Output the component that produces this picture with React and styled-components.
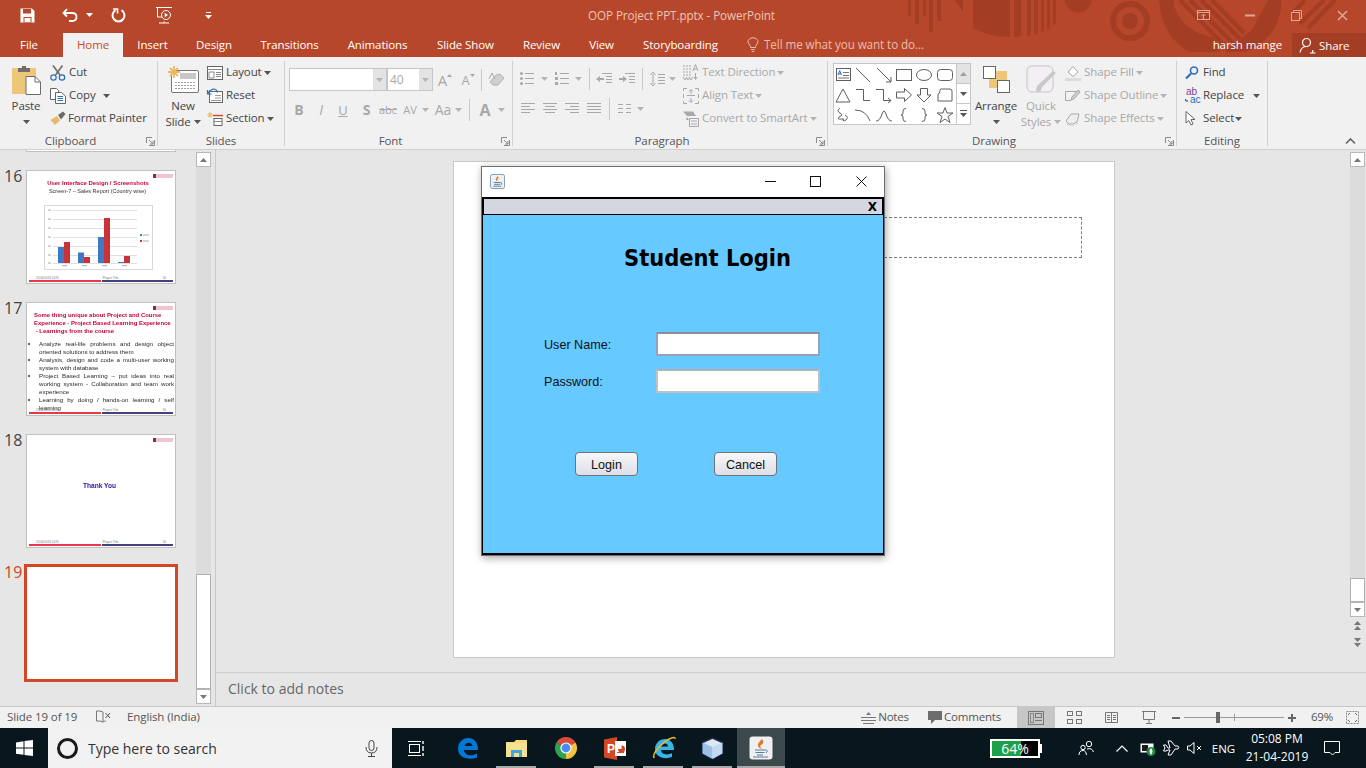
import React from 'react';
import styled, { createGlobalStyle } from 'styled-components';

const UI = `'Open Sans', 'Noto Sans', 'Liberation Sans', sans-serif`;
const RED = '#b7472a';
const DARK_RED = '#a33e24';
const OFF = '#a8a8a8';
const INK = '#444444';

const Global = createGlobalStyle`
  html, body { margin: 0; padding: 0; background: #e6e6e6; overflow: hidden; }
  * { box-sizing: border-box; }
`;

const Screen = styled.div`
  width: 1366px;
  height: 768px;
  display: flex;
  flex-direction: column;
  overflow: hidden;
  font-family: ${UI};
  font-size: 11.5px;
  letter-spacing: -0.1px;
  color: ${INK};
`;

const Svg = styled.svg`
  display: block;
  flex-shrink: 0;
  overflow: visible;
`;
const Ico = ({ w = 16, h = 16, children, ...rest }) => (
  <Svg width={w} height={h} viewBox={`0 0 ${w} ${h}`} fill="none" {...rest}>
    {children}
  </Svg>
);

/* title bar */
const TitleBar = styled.div`
  position: relative;
  height: 30px;
  display: flex;
  align-items: center;
  background: ${RED};
`;
const Pattern = styled.svg`
  position: absolute;
  left: 890px;
  top: 0;
`;
const Qat = styled.div`
  position: relative;
  width: 230px;
  display: flex;
  align-items: center;
  padding-left: 18px;
`;
const QatSlot = styled.div`
  width: ${p => p.$w}px;
  margin-left: ${p => p.$ml || 0}px;
  flex-shrink: 0;
  display: flex;
  justify-content: center;
`;
const DocTitle = styled.div`
  position: relative;
  flex: 1;
  text-align: center;
  color: #eec4b8;
  font-size: 11.7px;
`;
const WinControls = styled.div`
  position: relative;
  margin-left: 47px;
  display: flex;
`;
const WinSlot = styled.div`
  width: 46.5px;
  display: flex;
  justify-content: center;
`;

/* tab row */
const TabRow = styled.div`
  position: relative;
  height: 27px;
  display: flex;
  align-items: flex-end;
`;
const TabBack = styled.div`
  background: ${RED};
`;
const Tab = styled.div`
  width: ${p => p.$w}px;
  margin-left: ${p => p.$ml || 0}px;
  height: 24px;
  padding-bottom: 2px;
  display: flex;
  align-items: center;
  justify-content: center;
  font-size: 11.5px;
  color: ${p => (p.$active ? '#d24726' : '#ffffff')};
  background: ${p => (p.$active ? '#f1f1f1' : 'transparent')};
`;
const TellMe = styled.div`
  margin-left: 15px;
  height: 24px;
  padding-bottom: 2px;
  display: flex;
  align-items: center;
  gap: 5px;
  font-size: 11.7px;
  color: #ecbcae;
`;
const UserName = styled.div`
  margin-left: auto;
  height: 24px;
  padding-bottom: 2px;
  display: flex;
  align-items: center;
  color: #fff;
`;
const ShareBtn = styled.div`
  margin-left: 10px;
  width: 74px;
  height: 24px;
  display: flex;
  align-items: center;
  gap: 3px;
  padding-left: 7px;
  color: #fff;
  background: ${DARK_RED};
`;

/* ribbon */
const Ribbon = styled.div`
  position: relative;
  height: 93px;
  padding-top: 4px;
  display: flex;
  align-items: flex-start;
  background: #f1f1f1;
  border-bottom: 1px solid #d0d0d0;
`;
const Group = styled.div`
  position: relative;
  width: ${p => p.$w}px;
  height: 85px;
  flex-shrink: 0;
  border-right: 1px solid #d2d2d2;
`;
const GroupBody = styled.div`
  height: 71px;
  display: flex;
  align-items: flex-start;
  padding-left: ${p => p.$pl || 0}px;
`;
const GroupLabel = styled.div`
  height: 14px;
  line-height: 18px;
  text-align: center;
  padding-right: ${p => (p.$launcher ? 16 : 0)}px;
  color: #555;
`;
const Launcher = styled.div`
  position: absolute;
  right: 2px;
  bottom: 0;
`;
const Collapse = styled.div`
  position: absolute;
  left: 1345px;
  top: 81px;
`;
const BigBtn = styled.div`
  width: ${p => p.$w}px;
  margin-left: ${p => p.$ml || 0}px;
  display: flex;
  flex-direction: column;
  align-items: center;
  color: ${p => (p.$off ? OFF : INK)};
`;
const BigIcon = styled.div`
  height: 37px;
  display: flex;
  align-items: center;
  justify-content: center;
`;
const BigLine = styled.div`
  height: 16px;
  line-height: 16px;
  display: flex;
  align-items: center;
  gap: 3px;
  white-space: nowrap;
`;
const SmallCol = styled.div`
  margin-left: ${p => p.$ml || 0}px;
  display: flex;
  flex-direction: column;
`;
const Tool = styled.div`
  height: 23px;
  padding-bottom: 2px;
  display: flex;
  align-items: center;
  white-space: nowrap;
  color: ${p => (p.$off ? OFF : INK)};
`;
const ToolIcon = styled.div`
  width: ${p => p.$w || 19}px;
  margin-top: 2px;
  display: flex;
  justify-content: flex-start;
`;
const ToolCaret = styled.div`
  margin-left: ${p => p.$ml || 2}px;
  margin-top: 2px;
`;
const Stack = styled.div`
  width: ${p => p.$w}px;
  flex-shrink: 0;
  padding-top: ${p => p.$pt || 7}px;
  display: flex;
  flex-direction: column;
  gap: 7px;
`;
const IconRow = styled.div`
  height: 23px;
  display: flex;
  align-items: center;
  padding-left: ${p => p.$pl || 0}px;
`;
const Slot = styled.div`
  width: ${p => p.$w}px;
  flex-shrink: 0;
  display: flex;
  justify-content: center;
  align-items: center;
  color: ${OFF};
  font-size: ${p => p.$size || 13}px;
  font-weight: ${p => (p.$bold ? 700 : 400)};
  font-style: ${p => (p.$italic ? 'italic' : 'normal')};
  text-decoration: ${p => p.$deco || 'none'};
  white-space: nowrap;
`;
const RowSep = styled.div`
  width: 1px;
  height: 22px;
  margin-left: ${p => p.$ml || 0}px;
  background: #c8c8c8;
  flex-shrink: 0;
`;
const Combo = styled.div`
  width: ${p => p.$w}px;
  height: 23px;
  display: flex;
  background: #fff;
  border: 1px solid #c6c6c6;
`;
const ComboText = styled.div`
  flex: 1;
  padding-left: 2px;
  line-height: 21px;
  font-size: 12px;
  color: ${OFF};
`;
const ComboDrop = styled.div`
  width: 13px;
  display: flex;
  align-items: center;
  justify-content: center;
  background: #e3e3e3;
`;
const Gallery = styled.div`
  margin-top: 2px;
  margin-left: 5px;
  width: 138px;
  height: 62px;
  display: flex;
  background: #fff;
  border: 1px solid #c6c6c6;
`;
const GalleryGrid = styled.div`
  flex: 1;
  margin-left: -1px;
  padding-top: 1px;
  display: grid;
  grid-template-columns: repeat(6, 20.3px);
  grid-auto-rows: 20px;
  justify-items: center;
  align-items: center;
`;
const GalleryScroll = styled.div`
  width: 14px;
  display: flex;
  flex-direction: column;
  border-left: 1px solid #c6c6c6;
`;
const GalleryBtn = styled.div`
  height: 20px;
  display: flex;
  align-items: center;
  justify-content: center;
  background: ${p => (p.$off ? '#e3e3e3' : '#fff')};
  border-bottom: 1px solid ${p => (p.$last ? 'transparent' : '#c6c6c6')};
`;

/* main area */
const Main = styled.div`
  flex: 1;
  display: flex;
  min-height: 0;
  background: #e6e6e6;
`;
const LeftPane = styled.div`
  width: 216px;
  display: flex;
  border-right: 1px solid #c8c8c8;
`;
const ThumbList = styled.div`
  flex: 1;
  overflow: hidden;
`;
const ThumbTail = styled.div`
  width: 150px;
  height: 2px;
  margin: 0 0 18px 26px;
  background: #fff;
  border: 1px solid #c0c0c0;
  border-top: 0;
`;
const ThumbItem = styled.div`
  display: flex;
  margin-bottom: 18px;
`;
const ThumbNum = styled.div`
  width: 26px;
  padding-left: 4px;
  margin-top: -4px;
  line-height: 20px;
  font-size: 16px;
  letter-spacing: 0;
  color: ${p => (p.$active ? '#d24726' : '#444')};
`;
const Thumb = styled.div`
  position: relative;
  width: 150px;
  height: 114px;
  flex-shrink: 0;
  display: flex;
  flex-direction: column;
  overflow: hidden;
  background: #fff;
  border: 1px solid #c0c0c0;
  outline: ${p => (p.$active ? '3px solid #d24726' : 'none')};
  outline-offset: -1px;
  font-family: 'Liberation Sans', sans-serif;
  letter-spacing: 0;
`;
const ThumbLogo = styled.div`
  align-self: flex-end;
  width: 20px;
  height: 4px;
  margin: 3px 2px 0 0;
  background: linear-gradient(90deg, #7a2f55 0 3px, #efc6cf 3px);
  filter: blur(0.5px);
`;
const ThumbTitle = styled.div`
  padding: 1px ${p => (p.$align ? 7 : 13)}px 0 7px;
  font-size: 5.95px;
  line-height: 8.2px;
  font-weight: 700;
  color: #cc0038;
  text-align: ${p => p.$align || 'center'};
  white-space: nowrap;
  filter: blur(0.3px);
`;
const ThumbSub = styled.div`
  padding-right: 7px;
  text-align: center;
  font-size: 5.5px;
  line-height: 8px;
  color: #333;
  filter: blur(0.3px);
`;
const ThumbChart = styled.div`
  margin: 10px 0 0 17px;
  width: 109px;
  height: 65px;
  border: 1px solid #d8d8d8;
  filter: blur(0.3px);
`;
const ThumbBullets = styled.ul`
  margin: 4px 0 0;
  padding: 0 1px 0 12px;
  font-size: 6.2px;
  line-height: 8px;
  color: #2a2a2a;
  filter: blur(0.3px);
  & li { text-align: justify; }
`;
const ThumbCenter = styled.div`
  height: 0;
  margin-top: 40px;
  padding-right: 3px;
  text-align: center;
  font-size: 6.6px;
  font-weight: 700;
  color: #3a0f9c;
  filter: blur(0.25px);
`;
const ThumbFoot = styled.div`
  position: absolute;
  left: 0;
  right: 0;
  bottom: 0;
  padding: 0 1px 1px;
`;
const ThumbFootText = styled.div`
  display: flex;
  justify-content: space-between;
  padding: 0 8px;
  font-size: 3px;
  line-height: 4px;
  color: #777;
`;
const ThumbBars = styled.div`
  display: flex;
  gap: 1px;
  height: 2px;
  padding: 0 1px;
  & > div:first-child { width: 72px; background: #e8384a; }
  & > div:last-child { flex: 1; background: #46407f; }
`;
const VScroll = styled.div`
  width: 15px;
  margin: 2px ${p => p.$mr || 4}px 0 0;
  display: flex;
  flex-direction: column;
  align-items: stretch;
`;
const ScrollBtn = styled.div`
  height: 15px;
  display: flex;
  align-items: center;
  justify-content: center;
  background: #fff;
  border: 1px solid #b8b8b8;
`;
const ScrollTrack = styled.div`
  height: ${p => p.$h}px;
  background: #dcdcdc;
`;
const ScrollThumb = styled.div`
  height: ${p => p.$h}px;
  background: #fff;
  border: 1px solid #b0b0b0;
`;
const ScrollJump = styled.div`
  height: 17px;
  display: flex;
  align-items: center;
  justify-content: center;
`;
const WorkColumn = styled.div`
  flex: 1;
  min-width: 0;
  display: flex;
  flex-direction: column;
`;
const Editor = styled.div`
  height: 522px;
  display: flex;
  justify-content: space-between;
`;
const Slide = styled.div`
  position: relative;
  width: 662px;
  height: 497px;
  margin: 11px 0 0 237px;
  background: #fff;
  border: 1px solid #c8c8c8;
`;
const Placeholder = styled.div`
  position: absolute;
  left: 30px;
  top: 55px;
  width: 598px;
  height: 41px;
  border: 1px dashed #7f7f7f;
`;
const NotesPane = styled.div`
  flex: 1;
  display: flex;
  align-items: center;
  padding: 0 0 2px 12px;
  font-size: 14px;
  color: #666;
  letter-spacing: 0;
  border-top: 1px solid #cfcfcf;
`;

/* java window */
const JavaWin = styled.div`
  position: absolute;
  left: 27px;
  top: 4px;
  width: 404px;
  height: 390px;
  display: flex;
  flex-direction: column;
  background: #fff;
  border: 1px solid #6d6d6d;
  box-shadow: 1px 2px 8px rgba(0, 0, 0, 0.35);
  font-family: 'Liberation Sans', sans-serif;
  letter-spacing: 0;
`;
const JavaTitle = styled.div`
  height: 30px;
  padding: 0 0 2px 8px;
  display: flex;
  align-items: center;
`;
const JavaBtns = styled.div`
  margin-left: auto;
  display: flex;
`;
const JavaBtn = styled.div`
  width: 45.5px;
  display: flex;
  justify-content: center;
`;
const Inner = styled.div`
  flex: 1;
  display: flex;
  flex-direction: column;
  border: 1px solid #000;
  border-top-width: 2px;
  border-bottom-width: 2px;
`;
const InnerBar = styled.div`
  height: 16px;
  display: flex;
  justify-content: flex-end;
  align-items: center;
  padding-right: 5px;
  background: #d4d7e0;
  border: 1px solid #000;
  border-width: 0 1px 1px;
  font-family: 'DejaVu Sans', sans-serif;
  font-size: 12px;
  font-weight: 700;
  color: #000;
`;
const LoginPanel = styled.div`
  flex: 1;
  padding: 27px 0 0 61px;
  background: #66c9ff;
`;
const LoginTitle = styled.div`
  margin-left: 80px;
  padding-top: 1px;
  line-height: 30px;
  font-family: 'DejaVu Sans', sans-serif;
  font-stretch: condensed;
  font-size: 23.4px;
  font-weight: 700;
  color: #000;
`;
const FormGrid = styled.div`
  margin-top: 59px;
  display: grid;
  grid-template-columns: 112px 164px;
  grid-auto-rows: 24px;
  row-gap: 13px;
  align-items: center;
`;
const FieldLabel = styled.label`
  padding-top: 1px;
  font-size: 12.6px;
  color: #111;
`;
const Field = styled.input`
  width: 164px;
  height: 24px;
  padding: 0;
  background: #fff;
  border: 2px solid ${p => (p.$focus ? '#93a2bb' : '#bcc0c7')};
  border-top-color: ${p => (p.$focus ? '#8a909c' : '#aeb2b9')};
  outline: none;
`;
const BtnRow = styled.div`
  margin: 59px 0 0 31px;
  display: flex;
  gap: 76px;
`;
const LoginBtn = styled.button`
  width: 63px;
  height: 24px;
  padding: 1px 0 0;
  font-family: 'Liberation Sans', sans-serif;
  font-size: 12.6px;
  color: #111;
  background: linear-gradient(#f6f7f9, #dcdfe6);
  border: 1px solid #6f747c;
  border-radius: 4px;
`;

/* status bar */
const StatusBar = styled.div`
  height: 22px;
  display: flex;
  align-items: center;
  padding-left: 7px;
  background: #f1f1f1;
  border-top: 1px solid #c8c8c8;
  color: #555;
`;
const StatusText = styled.div`
  width: ${p => (p.$w ? `${p.$w}px` : 'auto')};
  padding-bottom: 2px;
  white-space: nowrap;
`;
const StatusRight = styled.div`
  margin-left: auto;
  height: 100%;
  display: flex;
  align-items: center;
  letter-spacing: -0.2px;
`;
const StatusBtn = styled.div`
  width: ${p => p.$w}px;
  height: 100%;
  padding-left: ${p => p.$pl || 0}px;
  display: flex;
  align-items: center;
  justify-content: ${p => (p.$pl ? 'flex-start' : 'center')};
  gap: 2px;
  background: ${p => (p.$on ? '#c6c6c6' : 'transparent')};
`;
const ZoomSlider = styled.div`
  position: relative;
  width: 100px;
  height: 1px;
  background: #9a9a9a;
  &::after {
    content: '';
    position: absolute;
    left: 50px;
    top: -3px;
    width: 1px;
    height: 7px;
    background: #9a9a9a;
  }
`;
const ZoomKnob = styled.div`
  position: absolute;
  left: 32px;
  top: -5px;
  width: 4px;
  height: 11px;
  background: #666;
`;

/* taskbar */
const Taskbar = styled.div`
  height: 40px;
  display: flex;
  align-items: stretch;
  background: #07171d;
  color: #fff;
  font-size: 11.5px;
`;
const StartBtn = styled.div`
  width: 48px;
  display: flex;
  align-items: center;
  justify-content: center;
`;
const SearchBox = styled.div`
  width: 344px;
  display: flex;
  align-items: center;
  background: #f2f2f2;
  padding-left: 8px;
`;
const SearchText = styled.div`
  margin-left: 9px;
  font-size: 14px;
  color: #333;
  letter-spacing: 0;
  flex: 1;
`;
const MicSlot = styled.div`
  width: 27px;
`;
const TaskSlot = styled.div`
  position: relative;
  width: ${p => p.$w || 49}px;
  margin-left: ${p => p.$ml || 0}px;
  display: flex;
  align-items: center;
  justify-content: center;
  background: ${p => (p.$active ? '#3b484c' : 'transparent')};
  &::after {
    content: '';
    display: ${p => (p.$open ? 'block' : 'none')};
    position: absolute;
    bottom: 0;
    left: ${p => (p.$active ? 0 : 4)}px;
    right: ${p => (p.$active ? 0 : 5)}px;
    height: 2px;
    background: #a9a9a9;
  }
`;
const Battery = styled.div`
  position: relative;
  width: 50px;
  height: 19px;
  margin: 11px 0 0 205px;
  display: flex;
  align-items: center;
  justify-content: center;
  border: 2px solid #fff;
  font-size: 14px;
  letter-spacing: 0;
  background: linear-gradient(90deg, #1ea04b 0 64%, #000 64%);
  &::after {
    content: '';
    position: absolute;
    right: -4px;
    top: 3px;
    width: 2px;
    height: 9px;
    background: #fff;
  }
`;
const TraySlot = styled.div`
  width: ${p => p.$w}px;
  margin-left: ${p => p.$ml || 0}px;
  display: flex;
  align-items: center;
  justify-content: center;
  white-space: nowrap;
  letter-spacing: 0;
`;
const Clock = styled.div`
  width: 58px;
  margin-left: 8px;
  display: flex;
  flex-direction: column;
  align-items: center;
  justify-content: center;
  line-height: 18.5px;
  font-size: 12px;
  white-space: nowrap;
  letter-spacing: 0;
`;

/* small shared drawings */
const Caret = ({ c = '#555', up }) => (
  <Ico w={7} h={4}>
    <path d={up ? 'M0 4 L3.5 0 L7 4Z' : 'M0 0 L7 0 L3.5 4Z'} fill={c} />
  </Ico>
);
const OffCaret = () => <Caret c="#b4b4b4" />;
const LaunchIcon = () => (
  <Ico w={9} h={9}>
    <path d="M0.5 6 V0.5 H6 M8.5 3 V8.5 H3" stroke="#8a8a8a" />
    <path d="M3 3 L7 7 M7 4 V7 H4" stroke="#8a8a8a" />
  </Ico>
);
const Lines = ({ c = OFF, rows, w = 14, x = 0 }) =>
  rows.map((y, i) => <path key={i} d={`M${x} ${y}.5 h${w}`} stroke={c} />);

const ParaLines = ({ widths }) => (
  <Ico w={14} h={13}>
    {widths.map((o, i) => (
      <path key={i} d={`M${o[0]} ${i * 3 + 1}.5 H${o[1]}`} stroke={OFF} />
    ))}
  </Ico>
);

const TitlePattern = () => (
  <Pattern width={476} height={57} viewBox="0 0 476 57">
    <g fill={DARK_RED}>
      <rect x="18" y="0" width="3" height="16" />
      <rect x="25" y="0" width="4" height="24" />
      <rect x="33" y="0" width="3" height="16" />
      <rect x="39" y="0" width="4" height="32" />
      <rect x="47" y="0" width="4" height="21" />
      <path d="M65 0 H73 V12Z" />
      <path d="M83 0 H120 V37 Q100 37 83 28Z" />
      <path d="M124 0 H131 V36 L124 37Z" />
      <path d="M137 0 H141 V35 L137 36Z" />
      <path d="M144 0 H148 V33 L144 35Z" />
      <path d="M151 0 H154 V31 L151 33Z" />
      <path d="M157 0 H160 V28 L157 30Z" />
      <path d="M163 0 H166 V23 L163 26Z" />
      <circle cx="188" cy="-1" r="13.5" />
      <circle cx="240" cy="21" r="8" />
      <circle cx="240" cy="21" r="17" fill="none" stroke={DARK_RED} strokeWidth="6" />
      <path d="M269 0 H284 V6 Q293 32 325 38 L330 52 H300 Q272 38 269 0Z" />
      <path d="M391 0 V8 Q388 35 362 49 L355 52 H335 L362 30 L378 0Z" />
    </g>
    <g stroke={DARK_RED} strokeWidth="4.5">
      <path d="M290 0 L338 49" />
      <path d="M300 0 L344 44" />
      <path d="M311 0 L350 39" />
      <path d="M322 0 L354 33" />
      <path d="M415 0 L402 14" />
      <path d="M434 0 L410 24" />
      <path d="M445 0 L418 28" />
    </g>
  </Pattern>
);

const ShapeCell = ({ children }) => <Ico w={18} h={16}>{children}</Ico>;
const SHAPE = { stroke: '#5f5f5f', fill: 'none' };

const GalleryShapes = () => (
  <GalleryGrid>
    <ShapeCell>
      <rect x="2.5" y="1.5" width="14" height="12" stroke="#5f5f5f" />
      <path d="M9 5.5 h6 M9 8.5 h6 M4 11 h11" stroke="#777" />
      <path d="M4 8 L5.7 3.5 L7.4 8 M4.6 6.8 H6.9" stroke="#2a6ebb" />
    </ShapeCell>
    <ShapeCell><path d="M2 1 L16 15" {...SHAPE} /></ShapeCell>
    <ShapeCell><path d="M2 1 L16 15 M16 10 V15 H11" {...SHAPE} /></ShapeCell>
    <ShapeCell><rect x="1.5" y="2.5" width="15" height="11" {...SHAPE} /></ShapeCell>
    <ShapeCell><ellipse cx="9" cy="8" rx="7.5" ry="5.5" {...SHAPE} /></ShapeCell>
    <ShapeCell><rect x="1.5" y="2.5" width="15" height="11" rx="3" {...SHAPE} /></ShapeCell>
    <ShapeCell><path d="M9 2 L16 15 H2Z" {...SHAPE} /></ShapeCell>
    <ShapeCell><path d="M2 2.5 H9.5 V13.5 H16" {...SHAPE} /></ShapeCell>
    <ShapeCell><path d="M1 2.5 H8.5 V13.5 H16 M13 11 L16 13.5 L13 16" {...SHAPE} /></ShapeCell>
    <ShapeCell><path d="M1.5 5 H9.5 V1.5 L16.5 8 L9.5 14.5 V11 H1.5Z" {...SHAPE} /></ShapeCell>
    <ShapeCell><path d="M5.5 1.5 H12.5 V8 H16 L9 15 L2 8 H5.5Z" {...SHAPE} /></ShapeCell>
    <ShapeCell><path d="M5 2 H14 Q16 2 16 4 V14 H2 V7 Q4 7 4 3.5 Q4 2 5 2Z" {...SHAPE} /></ShapeCell>
    <ShapeCell><path d="M6 1 Q2 4 6 6 Q10 8 5 10 Q3 13 7 12 Q11 11 9 14 M11 8 Q15 10 12 13 Q9 15 9 12" {...SHAPE} /></ShapeCell>
    <ShapeCell><path d="M1 3 Q12 3 16 14" {...SHAPE} /></ShapeCell>
    <ShapeCell><path d="M1 14 Q5 14 7 7 Q9 1 11 7 Q13 14 17 14" {...SHAPE} /></ShapeCell>
    <ShapeCell><path d="M11 1.5 Q8 1.5 8 4 V6 Q8 8 6 8 Q8 8 8 10 V12 Q8 14.5 11 14.5" {...SHAPE} /></ShapeCell>
    <ShapeCell><path d="M7 1.5 Q10 1.5 10 4 V6 Q10 8 12 8 Q10 8 10 10 V12 Q10 14.5 7 14.5" {...SHAPE} /></ShapeCell>
    <ShapeCell><path d="M9 0.5 L11 6 H17 L12 9.5 L14 15.5 L9 12 L4 15.5 L6 9.5 L1 6 H7Z" {...SHAPE} /></ShapeCell>
  </GalleryGrid>
);

const ChartPic = () => (
  <Svg width={107} height={63} viewBox="0 0 107 63">
    {[4, 13, 22, 31, 40, 49, 57].map(y => (
      <path key={y} d={`M8 ${y}.5 H92`} stroke="#e0e0e0" />
    ))}
    {[4, 13, 22, 31, 40, 49, 57].map(y => (
      <rect key={y} x="3" y={y - 0.5} width="3" height="1.2" fill="#bbb" />
    ))}
    <rect x="13" y="41" width="6" height="16" fill="#3f78c4" />
    <rect x="19" y="36" width="6" height="21" fill="#c8333a" />
    <rect x="33" y="46.5" width="6" height="10.5" fill="#3f78c4" />
    <rect x="39" y="51" width="6" height="6" fill="#c8333a" />
    <rect x="53" y="31" width="6" height="26" fill="#3f78c4" />
    <rect x="59" y="12" width="6" height="45" fill="#c8333a" />
    <rect x="73" y="56" width="6" height="1" fill="#3f78c4" />
    <rect x="79" y="50" width="6" height="7" fill="#c8333a" />
    <rect x="95" y="28" width="2" height="2" fill="#3f78c4" />
    <rect x="95" y="34" width="2" height="2" fill="#c8333a" />
    <path d="M98 29 h6 M98 35 h6" stroke="#aaa" />
    {[15, 35, 55, 75].map(x => (
      <rect key={x} x={x + 2} y="59" width="5" height="1.2" fill="#bbb" />
    ))}
  </Svg>
);

const TABS = [
  ['File', 58],
  ['Home', 60, 5, true],
  ['Insert', 59],
  ['Design', 64],
  ['Transitions', 87],
  ['Animations', 89],
  ['Slide Show', 87],
  ['Review', 65],
  ['View', 55],
  ['Storyboarding', 103]
];

const PaneThumbFoot = () => (
  <ThumbFoot>
    <ThumbFootText>
      <span>25/04/2019 2019</span>
      <span>Project Title</span>
      <span>16</span>
    </ThumbFootText>
    <ThumbBars>
      <div />
      <div />
    </ThumbBars>
  </ThumbFoot>
);

const SlidePane = () => (
  <LeftPane>
    <ThumbList>
      <ThumbTail />
      <ThumbItem>
        <ThumbNum>16</ThumbNum>
        <Thumb>
          <ThumbLogo />
          <ThumbTitle>User Interface Design / Screenshots</ThumbTitle>
          <ThumbSub>Screen-7 – Sales Report (Country wise)</ThumbSub>
          <ThumbChart>
            <ChartPic />
          </ThumbChart>
          <PaneThumbFoot />
        </Thumb>
      </ThumbItem>
      <ThumbItem>
        <ThumbNum>17</ThumbNum>
        <Thumb>
          <ThumbLogo />
          <ThumbTitle $align="left">
            Some thing unique about Project and Course
            <br />
            Experience - Project Based Learning Experience
            <br />
            &nbsp;- Learnings from the course
          </ThumbTitle>
          <ThumbBullets>
            <li>Analyze real-life problems and design object oriented solutions to address them</li>
            <li>Analysis, design and code a multi-user working system with database</li>
            <li>Project Based Learning – put ideas into real working system - Collaboration and team work experience</li>
            <li>Learning by doing / hands-on learning / self learning</li>
          </ThumbBullets>
          <PaneThumbFoot />
        </Thumb>
      </ThumbItem>
      <ThumbItem>
        <ThumbNum>18</ThumbNum>
        <Thumb>
          <ThumbLogo />
          <ThumbCenter>Thank You</ThumbCenter>
          <PaneThumbFoot />
        </Thumb>
      </ThumbItem>
      <ThumbItem>
        <ThumbNum $active>19</ThumbNum>
        <Thumb $active />
      </ThumbItem>
    </ThumbList>
    <VScroll>
      <ScrollBtn><Caret c="#777" up /></ScrollBtn>
      <ScrollTrack $h={407} />
      <ScrollThumb $h={115} />
      <ScrollBtn><Caret c="#777" /></ScrollBtn>
    </VScroll>
  </LeftPane>
);

const JavaCup = ({ size = 15 }) => (
  <Svg width={size} height={size} viewBox="0 0 16 16">
    <rect x="0.5" y="0.5" width="15" height="15" rx="2" fill="#eef1f4" stroke="#7b96ad" />
    <path d="M8.5 2 Q10 4 8 5.5 Q7 7 8.5 8 Q6 7 6 5.5 Q6.5 4 8.5 2Z" fill="#e2791f" />
    <path d="M4 9 H11 M4.5 11 H10.5 M3.5 13 H12" stroke="#4f7c9e" />
    <path d="M11 9 Q13.5 9 12 11.5" stroke="#4f7c9e" fill="none" />
  </Svg>
);

const LoginWindow = () => (
  <JavaWin>
    <JavaTitle>
      <JavaCup />
      <JavaBtns>
        <JavaBtn><Ico w={11} h={11}><path d="M0 5.5 H11" stroke="#111" /></Ico></JavaBtn>
        <JavaBtn><Ico w={11} h={11}><rect x="0.5" y="0.5" width="10" height="10" stroke="#111" /></Ico></JavaBtn>
        <JavaBtn><Ico w={11} h={11}><path d="M0.5 0.5 L10.5 10.5 M10.5 0.5 L0.5 10.5" stroke="#111" /></Ico></JavaBtn>
      </JavaBtns>
    </JavaTitle>
    <Inner>
      <InnerBar>X</InnerBar>
      <LoginPanel>
        <LoginTitle>Student Login</LoginTitle>
        <FormGrid>
          <FieldLabel>User Name:</FieldLabel>
          <Field $focus readOnly />
          <FieldLabel>Password:</FieldLabel>
          <Field readOnly />
        </FormGrid>
        <BtnRow>
          <LoginBtn>Login</LoginBtn>
          <LoginBtn>Cancel</LoginBtn>
        </BtnRow>
      </LoginPanel>
    </Inner>
  </JavaWin>
);

const App = () => (
  <Screen>
    <Global />
    <TabBack>
      <TitleBar>
        <TitlePattern />
        <Qat>
          <QatSlot $w={18}>
            <Ico w={15} h={15}>
              <path d="M0.5 0.5 H12 L14.5 3 V14.5 H0.5Z" fill="#fff" />
              <rect x="3" y="1" width="8" height="4.5" fill={RED} />
              <rect x="3.5" y="9" width="8" height="5.5" fill={RED} />
              <rect x="4.5" y="10" width="6" height="4" fill="#fff" />
            </Ico>
          </QatSlot>
          <QatSlot $w={34} $ml={17}>
            <Ico w={16} h={14}>
              <path d="M5 1 L1.5 5 L5 8.5 M2 5 H10 Q14.5 5 14.5 9 Q14.5 13 10 13 H7" stroke="#fff" strokeWidth="1.8" />
            </Ico>
          </QatSlot>
          <QatSlot $w={4}><Caret c="#fff" /></QatSlot>
          <QatSlot $w={54}>
            <Ico w={15} h={15}>
              <path d="M10.5 2.2 A6 6 0 1 1 4.5 2.2" stroke="#fff" strokeWidth="2" />
              <path d="M3 1 H7.5 V5.5" stroke="#fff" strokeWidth="1.6" transform="translate(-1 0)" />
            </Ico>
          </QatSlot>
          <QatSlot $w={38}>
            <Ico w={18} h={18}>
              <path d="M1 1.5 H17 M2.5 1.5 V11 H7 M9 15.5 V17 M4 17 H14" stroke="#fff" />
              <circle cx="11" cy="9" r="4.5" stroke="#fff" />
              <path d="M9.7 6.8 L13 9 L9.7 11.2Z" fill="#fff" />
            </Ico>
          </QatSlot>
          <QatSlot $w={50}>
            <Ico w={7} h={7}>
              <path d="M1 0.5 H6" stroke="#fff" />
              <path d="M0 3 H7 L3.5 7Z" fill="#fff" />
            </Ico>
          </QatSlot>
        </Qat>
        <DocTitle>OOP Project PPT.pptx - PowerPoint</DocTitle>
        <WinControls>
          <WinSlot>
            <Ico w={13} h={10}>
              <rect x="0.5" y="0.5" width="12" height="9" stroke="#dca697" />
              <path d="M0.5 2.5 H12.5 M6.5 9 V4 M4.5 6 L6.5 4 L8.5 6" stroke="#dca697" />
            </Ico>
          </WinSlot>
          <WinSlot>
            <Ico w={10} h={10}><path d="M0 5.5 H10" stroke="#dca697" strokeWidth="2" /></Ico>
          </WinSlot>
          <WinSlot>
            <Ico w={11} h={11}>
              <rect x="0.5" y="2.5" width="8" height="8" stroke="#dca697" />
              <path d="M2.5 2.5 V0.5 H10.5 V8.5 H8.5" stroke="#dca697" />
            </Ico>
          </WinSlot>
          <WinSlot>
            <Ico w={11} h={11}><path d="M1 1 L10 10 M10 1 L1 10" stroke="#dca697" strokeWidth="1.6" /></Ico>
          </WinSlot>
        </WinControls>
      </TitleBar>
      <TabRow>
        {TABS.map(([name, w, ml, active]) => (
          <Tab key={name} $w={w} $ml={ml} $active={active}>{name}</Tab>
        ))}
        <TellMe>
          <Ico w={12} h={15}>
            <path d="M3.5 10.5 Q3.5 8.5 2 7 Q0.5 5 1.2 3.5 Q2.5 0.7 6 0.7 Q9.5 0.7 10.8 3.5 Q11.5 5 10 7 Q8.5 8.5 8.5 10.5Z M4 12.5 H8 M4.8 14.5 H7.2" stroke="#ecbcae" />
          </Ico>
          Tell me what you want to do...
        </TellMe>
        <UserName>harsh mange</UserName>
        <ShareBtn>
          <Ico w={17} h={17}>
            <circle cx="7.5" cy="5.5" r="4" stroke="#fff" strokeWidth="1.2" />
            <path d="M1 15.5 Q2 10 7 9.5 M11 16 H16.5 M13.7 13 V16.5" stroke="#fff" strokeWidth="1.2" />
          </Ico>
          Share
        </ShareBtn>
      </TabRow>
    </TabBack>

    <Ribbon>
      <Group $w={158}>
        <GroupBody $pl={8}>
          <BigBtn $w={36}>
            <BigIcon>
              <Ico w={30} h={30}>
                <rect x="1" y="3" width="24" height="26" rx="1" fill="#eec67a" />
                <path d="M7 3 H11 V1 H15 V3 H19 V7 H7Z" fill="#6d6d6d" />
                <path d="M15 11.5 H24 L29.5 17 V29.5 H15Z" fill="#fff" stroke="#6d6d6d" />
                <path d="M24 11.5 V17 H29.5" stroke="#6d6d6d" />
              </Ico>
            </BigIcon>
            <BigLine>Paste</BigLine>
            <BigLine><Caret /></BigLine>
          </BigBtn>
          <SmallCol $ml={6}>
            <Tool>
              <ToolIcon>
                <Ico w={16} h={16}>
                  <path d="M3 0.5 L10 10 M12.5 0.5 L5.5 10" stroke="#6d6d6d" strokeWidth="1.6" />
                  <circle cx="3.5" cy="12.5" r="2.7" stroke="#2a6ebb" strokeWidth="1.2" />
                  <circle cx="12" cy="12.5" r="2.7" stroke="#2a6ebb" strokeWidth="1.2" />
                </Ico>
              </ToolIcon>
              Cut
            </Tool>
            <Tool>
              <ToolIcon>
                <Ico w={16} h={16}>
                  <path d="M5 11.5 H0.5 V0.5 H6.5 L8.5 2.5 V4" stroke="#666" fill="#fff" />
                  <path d="M5.5 4.5 H11.5 L15.5 8 V15.5 H5.5Z" stroke="#666" fill="#fff" />
                  <path d="M7.5 8.5 H13 M7.5 10.5 H13 M7.5 12.5 H13" stroke="#2a6ebb" />
                </Ico>
              </ToolIcon>
              Copy
              <ToolCaret $ml={7}><Caret /></ToolCaret>
            </Tool>
            <Tool>
              <ToolIcon $w={18}>
                <Ico w={16} h={15}>
                  <path d="M0.5 9 L7 5 L10 9.5 L5 14 Q3 12 0.5 9Z" fill="#e8b968" />
                  <path d="M8 4 L13 0.5 L15.5 3 L11 8.5Z" fill="#6a6a6a" />
                </Ico>
              </ToolIcon>
              Format Painter
            </Tool>
          </SmallCol>
        </GroupBody>
        <GroupLabel $launcher>Clipboard</GroupLabel>
        <Launcher><LaunchIcon /></Launcher>
      </Group>

      <Group $w={127}>
        <GroupBody $pl={5}>
          <BigBtn $w={40}>
            <BigIcon>
              <Ico w={31} h={28}>
                <rect x="3.5" y="4.5" width="27" height="22" rx="1.5" fill="#fff" stroke="#777" />
                <rect x="12" y="7" width="16" height="6" fill="#c8c8c8" />
                <path d="M7 16.5 H27 M7 19.5 H27 M7 22.5 H27" stroke="#a0a0a0" strokeDasharray="2 1" />
                <path d="M6 0 V12 M0 6 H12 M2 2 L10 10 M10 2 L2 10" stroke="#e8b968" strokeWidth="1.8" />
              </Ico>
            </BigIcon>
            <BigLine>New</BigLine>
            <BigLine>Slide <Caret /></BigLine>
          </BigBtn>
          <SmallCol $ml={4}>
            <Tool>
              <ToolIcon>
                <Ico w={16} h={14}>
                  <rect x="0.5" y="0.5" width="15" height="13" stroke="#666" fill="#fff" />
                  <path d="M0.5 3.5 H15.5 M2 6 H7 V12 H2Z" stroke="#888" />
                  <path d="M9 6.5 H14 M9 8.5 H14 M9 10.5 H14" stroke="#888" />
                </Ico>
              </ToolIcon>
              Layout<ToolCaret><Caret /></ToolCaret>
            </Tool>
            <Tool>
              <ToolIcon>
                <Ico w={16} h={15}>
                  <rect x="2.5" y="3.5" width="13" height="11" stroke="#666" fill="#fff" />
                  <path d="M8 7.5 H14 M8 10 H14 M4 12.5 H14" stroke="#999" />
                  <path d="M0.5 6 L2.5 3 L6 1 Q10 1 10.5 4.5 M0.5 2 V6 H4.5" stroke="#2a6ebb" strokeWidth="1.2" />
                </Ico>
              </ToolIcon>
              Reset
            </Tool>
            <Tool>
              <ToolIcon>
                <Ico w={16} h={15}>
                  <path d="M3 1 V7 M0 4 H6 M1 2 L5 6 M5 2 L1 6" stroke="#e8b968" />
                  <path d="M6 4.5 H16" stroke="#d24726" strokeWidth="1.4" />
                  <rect x="7" y="7.5" width="8" height="7" stroke="#666" fill="#fff" />
                  <path d="M7 10.5 H15" stroke="#888" />
                </Ico>
              </ToolIcon>
              Section<ToolCaret><Caret /></ToolCaret>
            </Tool>
          </SmallCol>
        </GroupBody>
        <GroupLabel>Slides</GroupLabel>
      </Group>

      <Group $w={228}>
        <GroupBody>
          <Stack $w={227}>
            <IconRow $pl={4}>
              <Combo $w={98}>
                <ComboText />
                <ComboDrop><OffCaret /></ComboDrop>
              </Combo>
              <Combo $w={46}>
                <ComboText>40</ComboText>
                <ComboDrop><OffCaret /></ComboDrop>
              </Combo>
              <Slot $w={24} $size={15}>A<Ico w={5} h={3} style={{ marginBottom: 9 }}><path d="M0 3 L2.5 0 L5 3Z" fill={OFF} /></Ico></Slot>
              <Slot $w={22} $size={13}>A<Ico w={5} h={3} style={{ marginBottom: 9 }}><path d="M0 0 L2.5 3 L5 0Z" fill={OFF} /></Ico></Slot>
              <RowSep $ml={2} />
              <Slot $w={30}>
                <Ico w={16} h={14}>
                  <path d="M1 9 L7 2 L11 1 L15 5 L9 12 H4Z" fill="#cfcfcf" stroke="#b4b4b4" />
                  <path d="M0 6 L3 0 L6 6" stroke={OFF} />
                </Ico>
              </Slot>
            </IconRow>
            <IconRow $pl={4}>
              <Slot $w={20} $bold $size={14}>B</Slot>
              <Slot $w={24} $italic $size={14}>I</Slot>
              <Slot $w={20} $deco="underline">U</Slot>
              <Slot $w={27} $bold $size={14}>S</Slot>
              <Slot $w={16} $size={11} $deco="line-through">abc</Slot>
              <Slot $w={4} />
              <Slot $w={20} $size={11}>AV</Slot>
              <Slot $w={10}><OffCaret /></Slot>
              <Slot $w={26} $size={14}>Aa</Slot>
              <Slot $w={4}><OffCaret /></Slot>
              <RowSep $ml={9} />
              <Slot $w={30} $size={16} $bold>A</Slot>
              <Slot $w={2}><OffCaret /></Slot>
            </IconRow>
          </Stack>
        </GroupBody>
        <GroupLabel $launcher>Font</GroupLabel>
        <Launcher><LaunchIcon /></Launcher>
      </Group>

      <Group $w={315}>
        <GroupBody>
          <Stack $w={170} $pt={6}>
            <IconRow $pl={4}>
              <Slot $w={20}>
                <Ico w={14} h={13}>
                  <circle cx="1.5" cy="1.5" r="1.5" fill={OFF} /><circle cx="1.5" cy="6.5" r="1.5" fill={OFF} /><circle cx="1.5" cy="11.5" r="1.5" fill={OFF} />
                  <path d="M5 1.5 H14 M5 6.5 H14 M5 11.5 H14" stroke={OFF} />
                </Ico>
              </Slot>
              <Slot $w={14}><OffCaret /></Slot>
              <Slot $w={22}>
                <Ico w={14} h={13}>
                  <rect x="0" y="0" width="2" height="3" fill={OFF} /><rect x="0" y="5" width="3" height="3" fill={OFF} /><rect x="0" y="10" width="3" height="3" fill={OFF} />
                  <path d="M5 1.5 H14 M5 6.5 H14 M5 11.5 H14" stroke={OFF} />
                </Ico>
              </Slot>
              <Slot $w={10}><OffCaret /></Slot>
              <Slot $w={6} />
              <RowSep />
              <Slot $w={28}>
                <Ico w={16} h={12}>
                  <path d="M6 0.5 H16 M10 3.5 H16 M10 6.5 H16 M10 9.5 H16" stroke={OFF} />
                  <path d="M0 6 L4 3 V5 H8 V7 H4 V9Z" fill={OFF} />
                </Ico>
              </Slot>
              <Slot $w={18}>
                <Ico w={16} h={12}>
                  <path d="M6 0.5 H16 M10 3.5 H16 M10 6.5 H16 M10 9.5 H16" stroke={OFF} />
                  <path d="M8 6 L4 3 V5 H0 V7 H4 V9Z" fill={OFF} />
                </Ico>
              </Slot>
              <Slot $w={6} />
              <RowSep />
              <Slot $w={28}>
                <Ico w={15} h={16}>
                  <path d="M3 3 V13 M0.5 4 L3 1 L5.5 4 M0.5 12 L3 15 L5.5 12" stroke={OFF} />
                  <path d="M8 3.5 H15 M8 6.5 H15 M8 9.5 H15 M8 12.5 H15" stroke={OFF} />
                </Ico>
              </Slot>
              <Slot $w={2}><OffCaret /></Slot>
            </IconRow>
            <IconRow $pl={4}>
              <Slot $w={22}><ParaLines widths={[[0, 14], [0, 9], [0, 14], [0, 9]]} /></Slot>
              <Slot $w={22}><ParaLines widths={[[0, 14], [2, 12], [0, 14], [2, 12]]} /></Slot>
              <Slot $w={22}><ParaLines widths={[[0, 14], [5, 14], [0, 14], [5, 14]]} /></Slot>
              <Slot $w={22}><ParaLines widths={[[0, 14], [0, 14], [0, 14], [0, 14]]} /></Slot>
              <Slot $w={4} />
              <RowSep />
              <Slot $w={28}>
                <Ico w={13} h={11}>
                  <Lines rows={[1, 5, 9]} w={5} />
                  <Lines rows={[1, 5, 9]} w={5} x={8} />
                </Ico>
              </Slot>
              <Slot $w={4}><OffCaret /></Slot>
            </IconRow>
          </Stack>
          <SmallCol>
            <Tool $off>
              <ToolIcon>
                <Ico w={16} h={17}>
                  <path d="M1 1 V13 M4 1 V13 M7 1 V13" stroke={OFF} strokeDasharray="2 1" />
                  <path d="M-1 13 L1 16 L3 13 M2 13 L4 16 L6 13 M5 13 L7 16 L9 13" stroke={OFF} transform="translate(1 0)" />
                  <path d="M10 7 L12.5 0.5 L15 7 M11 5 H14" stroke={OFF} />
                  <path d="M12.5 9 V15 M11 13 L12.5 15.5 L14 13" stroke={OFF} />
                </Ico>
              </ToolIcon>
              Text Direction<ToolCaret><OffCaret /></ToolCaret>
            </Tool>
            <Tool $off>
              <ToolIcon>
                <Ico w={16} h={16}>
                  <path d="M0.5 3 V0.5 H4 M12 0.5 H15.5 V3 M0.5 13 V15.5 H4 M12 15.5 H15.5 V13 M0.5 6 V10 M15.5 6 V10" stroke={OFF} />
                  <path d="M8 2 V6 M6 3.5 L8 1.5 L10 3.5 M8 14 V10 M6 12.5 L8 14.5 L10 12.5 M4 7.5 H12" stroke={OFF} />
                </Ico>
              </ToolIcon>
              Align Text<ToolCaret><OffCaret /></ToolCaret>
            </Tool>
            <Tool $off>
              <ToolIcon>
                <Ico w={17} h={16}>
                  <path d="M0 0.5 H10 L13 5 H4Z" fill={OFF} />
                  <path d="M4 6 L6 9 H3Z" fill={OFF} />
                  <rect x="6.5" y="7.5" width="9" height="8" stroke={OFF} fill="#f5f0f5" />
                  <path d="M8 10 H14 M8 13 H14" stroke={OFF} />
                </Ico>
              </ToolIcon>
              Convert to SmartArt<ToolCaret><OffCaret /></ToolCaret>
            </Tool>
          </SmallCol>
        </GroupBody>
        <GroupLabel $launcher>Paragraph</GroupLabel>
        <Launcher><LaunchIcon /></Launcher>
      </Group>

      <Group $w={349}>
        <GroupBody>
          <Gallery>
            <GalleryShapes />
            <GalleryScroll>
              <GalleryBtn $off><Caret c="#a0a0a0" up /></GalleryBtn>
              <GalleryBtn><Caret /></GalleryBtn>
              <GalleryBtn $last>
                <Ico w={7} h={7}>
                  <path d="M0 0.5 H7" stroke="#555" />
                  <path d="M0 3 H7 L3.5 7Z" fill="#555" />
                </Ico>
              </GalleryBtn>
            </GalleryScroll>
          </Gallery>
          <BigBtn $w={40} $ml={5}>
            <BigIcon>
              <Ico w={27} h={27}>
                <rect x="6" y="5" width="18" height="17" fill="#eec67a" />
                <rect x="0.5" y="0.5" width="12" height="12" fill="#fff" stroke="#666" />
                <rect x="14.5" y="14.5" width="12" height="12" fill="#fff" stroke="#666" />
              </Ico>
            </BigIcon>
            <BigLine>Arrange</BigLine>
            <BigLine><Caret /></BigLine>
          </BigBtn>
          <BigBtn $w={42} $ml={4} $off>
            <BigIcon>
              <Ico w={30} h={30}>
                <rect x="1" y="1" width="26" height="26" rx="5" fill="#f3eff5" stroke="#c4c4c4" />
                <path d="M30 8 L16 22 L14 27 L10 26 L11 21 L27 6Z" fill="#c8c8c8" />
              </Ico>
            </BigIcon>
            <BigLine>Quick</BigLine>
            <BigLine>Styles <OffCaret /></BigLine>
          </BigBtn>
          <SmallCol $ml={3}>
            <Tool $off>
              <ToolIcon>
                <Ico w={16} h={16}>
                  <path d="M3 7 L8 1.5 L13 7 L8 11.5Z" stroke={OFF} fill="#fff" />
                  <rect x="0" y="13" width="16" height="3" fill="#dcdcdc" />
                </Ico>
              </ToolIcon>
              Shape Fill<ToolCaret><OffCaret /></ToolCaret>
            </Tool>
            <Tool $off>
              <ToolIcon>
                <Ico w={16} h={16}>
                  <path d="M12 3.5 H0.5 V12.5 H6" stroke={OFF} />
                  <path d="M6 12 L7 9 L13 2 L15 4 L9 11Z" fill="#cfcfcf" stroke={OFF} />
                </Ico>
              </ToolIcon>
              Shape Outline<ToolCaret><OffCaret /></ToolCaret>
            </Tool>
            <Tool $off>
              <ToolIcon>
                <Ico w={16} h={16}>
                  <path d="M1 10 L6 3 H14 L12 11 Q8 14 4 13Z" fill="#eee" stroke={OFF} />
                  <path d="M2 13 Q8 16 13 12 V13 Q8 16 2 14Z" fill="#cfcfcf" />
                </Ico>
              </ToolIcon>
              Shape Effects<ToolCaret><OffCaret /></ToolCaret>
            </Tool>
          </SmallCol>
        </GroupBody>
        <GroupLabel $launcher>Drawing</GroupLabel>
        <Launcher><LaunchIcon /></Launcher>
      </Group>

      <Group $w={91}>
        <GroupBody $pl={8}>
          <SmallCol>
            <Tool>
              <ToolIcon $w={18}>
                <Ico w={14} h={13}>
                  <circle cx="9" cy="4.5" r="3.5" stroke="#2a6ebb" strokeWidth="1.6" />
                  <path d="M6 7.5 L1 12.5" stroke="#2a6ebb" strokeWidth="2.2" />
                </Ico>
              </ToolIcon>
              Find
            </Tool>
            <Tool>
              <ToolIcon $w={18}>
                <Ico w={16} h={16}>
                  <text fontSize="10" fontFamily="Liberation Sans">
                    <tspan x="1" y="7" fill="#7a3fa0">ab</tspan>
                    <tspan x="5" y="15" fill="#2a6ebb">ac</tspan>
                  </text>
                  <path d="M0.5 11 V13 H3 M1.5 12 L3 13" stroke="#2a6ebb" />
                </Ico>
              </ToolIcon>
              Replace
              <ToolCaret $ml={9}><Caret /></ToolCaret>
            </Tool>
            <Tool>
              <ToolIcon $w={18}>
                <Ico w={11} h={15}>
                  <path d="M1 0.5 V12 L3.8 9.5 L6 14 L8 13 L6 8.5 H10Z" fill="#fff" stroke="#666" />
                </Ico>
              </ToolIcon>
              Select<ToolCaret $ml={1}><Caret /></ToolCaret>
            </Tool>
          </SmallCol>
        </GroupBody>
        <GroupLabel>Editing</GroupLabel>
      </Group>
      <Collapse>
        <Ico w={11} h={6}><path d="M1 5.5 L5.5 1 L10 5.5" stroke="#666" strokeWidth="1.6" /></Ico>
      </Collapse>
    </Ribbon>

    <Main>
      <SlidePane />
      <WorkColumn>
        <Editor>
          <Slide>
            <Placeholder />
            <LoginWindow />
          </Slide>
          <VScroll $mr={1}>
            <ScrollBtn><Caret c="#777" up /></ScrollBtn>
            <ScrollTrack $h={411} />
            <ScrollThumb $h={24} />
            <ScrollBtn><Caret c="#777" /></ScrollBtn>
            <ScrollJump>
              <Ico w={7} h={9}><path d="M0 4 L3.5 0 L7 4Z M0 9 L3.5 5 L7 9Z" fill="#777" /></Ico>
            </ScrollJump>
            <ScrollJump>
              <Ico w={7} h={9}><path d="M0 0 L3.5 4 L7 0Z M0 5 L3.5 9 L7 5Z" fill="#777" /></Ico>
            </ScrollJump>
          </VScroll>
        </Editor>
        <NotesPane>Click to add notes</NotesPane>
      </WorkColumn>
    </Main>

    <StatusBar>
      <StatusText $w={89}>Slide 19 of 19</StatusText>
      <StatusText $w={31}>
        <Ico w={15} h={13}>
          <path d="M7 2 Q4 0.5 0.5 1 V11 Q4 10.5 7 12 M7 2 V12 M7 12 Q8.5 11 10 11" stroke="#777" />
          <path d="M9.5 3 L14 8 M14 3 L9.5 8" stroke="#555" />
        </Ico>
      </StatusText>
      <StatusText $w={80}>English (India)</StatusText>
      <StatusRight>
        <StatusBtn $w={50}>
          <Ico w={15} h={12}><path d="M5 3 L7.5 0 L10 3Z" fill="#777" /><path d="M0 5.5 H15 M0 8.5 H15 M2 11.5 H13" stroke="#777" /></Ico>
          <StatusText>Notes</StatusText>
        </StatusBtn>
        <StatusBtn $w={107} $pl={18}>
          <Ico w={14} h={13}><path d="M0 0 H14 V9 H7 L3 13 V9 H0Z" fill="#6d6d6d" /></Ico>
          <StatusText>Comments</StatusText>
        </StatusBtn>
        <StatusBtn $w={38} $on>
          <Ico w={16} h={14}><rect x="0.5" y="0.5" width="15" height="13" stroke="#777" /><rect x="2.5" y="2.5" width="3" height="9" stroke="#888" /><rect x="7.5" y="2.5" width="6" height="4" stroke="#777" /><path d="M7 9.5 H14" stroke="#777" /></Ico>
        </StatusBtn>
        <StatusBtn $w={38}>
          <Ico w={15} h={13}><rect x="0.5" y="0.5" width="5" height="4" stroke="#777" /><rect x="9.5" y="0.5" width="5" height="4" stroke="#777" /><rect x="0.5" y="8.5" width="5" height="4" stroke="#777" /><rect x="9.5" y="8.5" width="5" height="4" stroke="#777" /></Ico>
        </StatusBtn>
        <StatusBtn $w={37}>
          <Ico w={13} h={13}><path d="M0.5 1.5 H12.5 V11.5 H0.5Z M6.5 1.5 V11.5 M2 4.5 H5 M2 6.5 H5 M2 8.5 H5 M8 4.5 H11 M8 6.5 H11 M8 8.5 H11" stroke="#777" /></Ico>
        </StatusBtn>
        <StatusBtn $w={38}>
          <Ico w={14} h={13}><path d="M0 0.5 H14 M1.5 0.5 V8.5 H12.5 V0.5 M7 8.5 V12 M4 12.5 H10" stroke="#777" /></Ico>
        </StatusBtn>
        <StatusBtn $w={16}><Ico w={8} h={2}><rect width="8" height="2" fill="#666" /></Ico></StatusBtn>
        <ZoomSlider><ZoomKnob /></ZoomSlider>
        <StatusBtn $w={16}><Ico w={8} h={8}><path d="M0 4 H8 M4 0 V8" stroke="#666" strokeWidth="2" /></Ico></StatusBtn>
        <StatusBtn $w={44}><StatusText>69%</StatusText></StatusBtn>
        <StatusBtn $w={16}>
          <Ico w={13} h={13}><rect x="0.5" y="0.5" width="12" height="12" stroke="#888" strokeDasharray="2 1" /><path d="M2 4 L4 2 M11 4 L9 2 M2 9 L4 11 M11 9 L9 11" stroke="#666" /></Ico>
        </StatusBtn>
        <StatusText $w={6} />
      </StatusRight>
    </StatusBar>

    <Taskbar>
      <StartBtn>
        <Ico w={17} h={16}>
          <path d="M0 2.4 L7.5 1.3 V7.6 H0Z M8.5 1.1 L17 0 V7.6 H8.5Z M0 8.6 H7.5 V14.8 L0 13.7Z M8.5 8.6 H17 V16 L8.5 14.9Z" fill="#fff" />
        </Ico>
      </StartBtn>
      <SearchBox>
        <Ico w={23} h={23}>
          <circle cx="11.5" cy="11.5" r="9" stroke="#1a1a1a" strokeWidth="3" />
        </Ico>
        <SearchText>Type here to search</SearchText>
        <MicSlot>
          <Ico w={13} h={17}>
            <rect x="4" y="0.5" width="5" height="10" rx="2.5" stroke="#444" />
            <path d="M1 7 Q1 13 6.5 13 Q12 13 12 7 M6.5 13 V16.5 M3 16.5 H10" stroke="#444" />
          </Ico>
        </MicSlot>
      </SearchBox>
      <TaskSlot $w={48}>
        <Ico w={16} h={15}>
          <rect x="1.5" y="3.5" width="10" height="8" stroke="#fff" />
          <path d="M0 0.5 H13 M0 14.5 H13" stroke="#fff" />
          <path d="M15 0 V3 M15 5 V10 M15 12 V15" stroke="#fff" strokeWidth="1.4" />
        </Ico>
      </TaskSlot>
      <TaskSlot $ml={3}>
        <Ico w={22} h={22}>
          <path d="M1 12 C1 5 6 1 11 1 C18 1 21 6.5 21 13 H7 C7 18 14 20 20 16.5 V20.5 C12 23.5 1 21 1 12Z M7.5 9 H15.5 C15 4.5 8.5 4.5 7.5 9Z" fill="#0078d7" fillRule="evenodd" />
        </Ico>
      </TaskSlot>
      <TaskSlot $open>
        <Ico w={22} h={19}>
          <path d="M0 3 H8 L10 1 H21 V18 H0Z" fill="#f6d97b" />
          <rect x="0" y="4" width="21" height="14" fill="#f8e191" />
          <path d="M5 11 H16 V18 H13 V14 H8 V18 H5Z" fill="#3ba8e0" />
        </Ico>
      </TaskSlot>
      <TaskSlot>
        <Ico w={24} h={24}>
          <path d="M12 12 L2.47 6.5 A11 11 0 0 1 21.53 6.5Z" fill="#dd4a3b" />
          <path d="M12 12 L21.53 6.5 A11 11 0 0 1 12 23Z" fill="#f5c33b" />
          <path d="M12 12 L12 23 A11 11 0 0 1 2.47 6.5Z" fill="#2fa24f" />
          <circle cx="12" cy="12" r="5.6" fill="#fff" />
          <circle cx="12" cy="12" r="4.4" fill="#4a8af4" />
        </Ico>
      </TaskSlot>
      <TaskSlot $open>
        <Ico w={22} h={23}>
          <path d="M0 2.5 L13 0 V23 L0 20.5Z" fill="#d24726" />
          <rect x="11" y="4" width="11" height="15" fill="#fff" />
          <path d="M14 12 A3.5 3.5 0 1 0 17.5 8.5 V12Z" fill="#d24726" />
          <path d="M13 15.5 H20" stroke="#d24726" />
          <text x="3" y="16" fontSize="12" fontWeight="700" fontFamily="Liberation Sans" fill="#fff">P</text>
        </Ico>
      </TaskSlot>
      <TaskSlot $open>
        <Ico w={24} h={24}>
          <path d="M3 13 C3 7 8 3 13 3 C19 3 22 8 22 14 H9 C9 18 15 20 20 17 V21 C12 24 3 21 3 13Z M9 10.5 H16 C16 6.5 10 6.5 9 10.5Z" fill="#37b4ea" fillRule="evenodd" />
          <path d="M2 22 C0 18 8 9 14 5 C18 2 24 0 23 3" stroke="#e4b52f" strokeWidth="1.6" />
        </Ico>
      </TaskSlot>
      <TaskSlot $open>
        <Ico w={23} h={23}>
          <path d="M11.5 1 L21.5 5.5 V16.5 L11.5 22 L1.5 16.5 V5.5Z" fill="#dbe9f6" stroke="#23264f" strokeWidth="1.5" />
          <path d="M1.5 5.5 L11.5 10 V22 L1.5 16.5Z" fill="#9cc1e8" />
          <path d="M11.5 10 L21.5 5.5 V16.5 L11.5 22Z" fill="#c3d9ef" />
        </Ico>
      </TaskSlot>
      <TaskSlot $w={48} $open $active>
        <Ico w={24} h={24}>
          <rect x="0.5" y="0.5" width="23" height="23" rx="3" fill="#eef0f2" />
          <path d="M13 3 Q16 7 12 9 Q10 11 13 13 Q8 11 9 8 Q10 6 13 3Z" fill="#e2791f" />
          <path d="M6 14 H16 M6.5 16.5 H15.5 M8 19 H14 M4 21 H19" stroke="#5b7c9b" />
          <path d="M16 14 Q20 14 17 17" stroke="#5b7c9b" />
        </Ico>
      </TaskSlot>
      <Battery>64%</Battery>
      <TraySlot $w={24} $ml={34}>
        <Ico w={16} h={16}>
          <circle cx="11" cy="4" r="2.7" stroke="#fff" />
          <circle cx="5" cy="7.5" r="2.2" stroke="#fff" />
          <path d="M1 15 Q1 10.5 5 10.5 Q8 10.5 8.5 15 M9 9 Q14 7.5 15.5 12" stroke="#fff" />
        </Ico>
      </TraySlot>
      <TraySlot $w={24} $ml={12}>
        <Ico w={12} h={7}><path d="M0.5 6.5 L6 1 L11.5 6.5" stroke="#fff" strokeWidth="1.2" /></Ico>
      </TraySlot>
      <TraySlot $w={26} $ml={1}>
        <Ico w={16} h={15}>
          <rect x="0.5" y="2.5" width="13" height="9" fill="#fff" />
          <rect x="2" y="4" width="6" height="6" fill="#1a1a1a" />
          <circle cx="11" cy="10.5" r="4.5" fill="#1d8a3f" />
          <path d="M11 7 Q14 10 11 14 Q8 10 11 7Z" fill="#fff" />
        </Ico>
      </TraySlot>
      <TraySlot $w={20}>
        <Ico w={17} h={16}>
          <path d="M0.5 5 H3 L5 8 H7 L5 1 H8 L12 6 H15 Q16.5 7.5 15 9 H12 L8 15 H5 L7 10 H5 L3 11 H0.5 L2 8Z" stroke="#fff" />
        </Ico>
      </TraySlot>
      <TraySlot $w={26}>
        <Ico w={15} h={12}>
          <path d="M0.5 4 H3 L7 0.5 V11.5 L3 8 H0.5Z" stroke="#fff" />
          <path d="M10 4 L14 8 M14 4 L10 8" stroke="#fff" />
        </Ico>
      </TraySlot>
      <TraySlot $w={33}>ENG</TraySlot>
      <Clock>
        <div>05:08 PM</div>
        <div>21-04-2019</div>
      </Clock>
      <TraySlot $w={30} $ml={11}>
        <Ico w={16} h={15}>
          <path d="M0.5 0.5 H15.5 V11.5 H11 L8.5 14 L6 11.5 H0.5Z" stroke="#fff" />
        </Ico>
      </TraySlot>
    </Taskbar>
  </Screen>
);

export default App;
